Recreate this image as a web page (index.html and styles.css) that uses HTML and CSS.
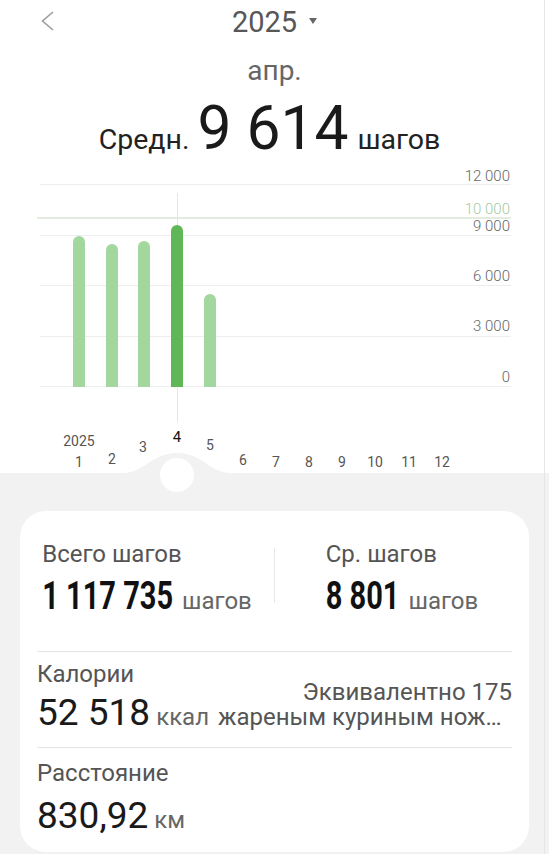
FILE: index.html
```html
<!DOCTYPE html>
<html>
<head>
    <meta charset="utf-8">
    <title>Шаги — 2025</title>
    <link rel="stylesheet" href="styles.css">
</head>
<body>
    <div class="top">
        <div class="topbar">
            <span class="back">
                <svg width="13" height="20" viewBox="0 0 13 20"><polyline points="12,1 1.5,10 12,19" fill="none" stroke="#9c9c9c" stroke-width="1.6"/></svg>
            </span>
            <div class="year">2025<span class="caret"></span></div>
            <span></span>
        </div>
        <div class="month">апр.</div>
        <div class="avg">
            <span class="avg-label">Средн.</span>
            <span class="avg-num">9&nbsp;614</span>
            <span class="avg-unit">шагов</span>
        </div>

        <!-- monthly steps chart, y: 0 at 226, 12 000 at 24 -->
        <svg class="chart" width="549" height="340" viewBox="0 0 549 340">
            <g stroke="#eeeeee" stroke-width="1">
                <line x1="40" y1="24.5" x2="511" y2="24.5"/>
                <line x1="40" y1="75.5" x2="511" y2="75.5"/>
                <line x1="40" y1="125.5" x2="511" y2="125.5"/>
                <line x1="40" y1="176.5" x2="511" y2="176.5"/>
                <line x1="40" y1="226.5" x2="511" y2="226.5"/>
            </g>
            <line x1="37" y1="58" x2="511" y2="58" stroke="#c8d6bf" stroke-width="1"/>

            <g class="axis" text-anchor="end">
                <text x="510" y="21">12 000</text>
                <text x="510" y="54" class="goal">10 000</text>
                <text x="510" y="71">9 000</text>
                <text x="510" y="121">6 000</text>
                <text x="510" y="171">3 000</text>
                <text x="510" y="222">0</text>
            </g>

            <line x1="177.5" y1="33" x2="177.5" y2="262" stroke="#e3e9e0" stroke-width="1"/>

            <g fill="#a2d89d">
                <path d="M73 227 V82 A6 6 0 0 1 85 82 V227 Z"/>
                <path d="M106 227 V90 A6 6 0 0 1 118 90 V227 Z"/>
                <path d="M138 227 V87 A6 6 0 0 1 150 87 V227 Z"/>
                <path d="M204 227 V140 A6 6 0 0 1 216 140 V227 Z"/>
            </g>
            <path d="M171 227 V71 A6 6 0 0 1 183 71 V227 Z" fill="#60b758"/>

            <g class="months" text-anchor="middle">
                <text x="79" y="286">2025</text>
                <text x="79" y="307">1</text>
                <text x="112" y="304">2</text>
                <text x="143" y="292">3</text>
                <text x="177" y="282" class="current">4</text>
                <text x="210" y="290">5</text>
                <text x="243" y="305">6</text>
                <text x="276" y="307">7</text>
                <text x="309" y="307">8</text>
                <text x="342" y="307">9</text>
                <text x="375" y="307">10</text>
                <text x="409" y="307">11</text>
                <text x="442" y="307">12</text>
            </g>

            <!-- grey bottom with the bump under the selected month -->
            <rect x="0" y="313" width="549" height="27" fill="#f2f2f2"/>
            <path d="M120 313.5 C146 313.5 150 293 177 293 C204 293 208 313.5 234 313.5 Z" fill="#f2f2f2"/>
            <circle cx="177" cy="315" r="17" fill="#ffffff"/>
        </svg>
    </div>

    <div class="summary">
        <div class="card">
            <div class="stats">
                <div class="stat">
                    <div>
                        <div class="label">Всего шагов</div>
                        <div class="value"><span class="num-c">1&nbsp;117&nbsp;735</span><span class="unit unit-wide">шагов</span></div>
                    </div>
                </div>
                <div class="vsep"></div>
                <div class="stat">
                    <div>
                        <div class="label">Ср. шагов</div>
                        <div class="value"><span class="num-c">8&nbsp;801</span><span class="unit unit-wide">шагов</span></div>
                    </div>
                </div>
            </div>

            <div class="row cal">
                <div>
                    <div class="label">Калории</div>
                    <div class="value value-cal"><span class="num">52&nbsp;518</span><span class="unit">ккал</span></div>
                </div>
                <div class="cal-note">
                    <div>Эквивалентно 175</div>
                    <div class="clip">жареным куриным ножкам</div>
                </div>
            </div>

            <div class="row dist">
                <div class="label">Расстояние</div>
                <div class="value value-dist"><span class="num">830,92</span><span class="unit">км</span></div>
            </div>
        </div>
    </div>

    <div class="edge"></div>
</body>
</html>
```

FILE: styles.css
```css
body {
    margin: 0;
    font-family: Roboto, "Noto Sans", sans-serif;
    background: #f2f2f2;
    color: #1c1c1c;
}

.top {
    background: #fff;
}

.topbar {
    height: 44px;
    display: grid;
    grid-template-columns: 1fr auto 1fr;
    align-items: center;
}

.back {
    display: flex;
    padding-left: 41px;
    padding-bottom: 2px;
}

.year {
    display: flex;
    align-items: center;
    font-size: 29px;
    line-height: 44px;
    color: #575757;
}

.caret {
    width: 0;
    height: 0;
    margin: 0 0 2px 12px;
    border-left: 4.5px solid transparent;
    border-right: 4.5px solid transparent;
    border-top: 6px solid #666;
}

.month {
    margin-top: 12px;
    height: 30px;
    line-height: 30px;
    font-size: 28px;
    color: #666;
    text-align: center;
}

.avg {
    margin-top: 11px;
    height: 63px;
    line-height: 63px;
    display: flex;
    justify-content: center;
    align-items: baseline;
    padding-right: 10px;
}

.avg-label,
.avg-unit {
    font-size: 28.5px;
    color: #222;
}

.avg-num {
    font-size: 60.5px;
    margin: 0 9px 0 8px;
    color: #1a1a1a;
}

.chart {
    display: block;
}

.chart text {
    font-family: Roboto, sans-serif;
}

.axis text {
    font-size: 15px;
    font-weight: 300;
    fill: #666;
}

.axis .goal {
    fill: #a7c9a2;
}

.months text {
    font-size: 14px;
    fill: #555;
}

.months .current {
    font-size: 15px;
    fill: #111;
}

/* summary card */

.summary {
    padding: 11px 20px 0;
}

.card {
    background: #fff;
    border-radius: 26px;
    padding: 0 17px;
    height: 341px;
    box-sizing: border-box;
}

.stats {
    margin: 0 -17px;
    padding: 29px 0 33px;
    display: grid;
    grid-template-columns: 1fr 1px 1fr;
}

.stat {
    display: flex;
    justify-content: center;
}

.vsep {
    height: 55px;
    margin-top: 8px;
    background: #e8e8e8;
}

.label {
    font-size: 24px;
    line-height: 28px;
    color: #555;
}

.value {
    margin-top: 8px;
    font-size: 37px;
    line-height: 42px;
    white-space: nowrap;
}

/* narrow, tall digits: small font stretched upwards from the baseline */
.num-c {
    display: inline-block;
    font-size: 29px;
    line-height: 30px;
    font-weight: 700;
    color: #111;
    transform: scaleY(1.31);
    transform-origin: 0 83%;
}

.num {
    color: #1a1a1a;
}

.unit {
    font-size: 24px;
    line-height: 24px;
    color: #666;
    margin-left: 6px;
}

.unit-wide {
    margin-left: 9px;
}

.row {
    border-top: 1px solid #e3e3e3;
}

.cal {
    display: flex;
    align-items: flex-end;
    gap: 9px;
    padding: 8px 0 13px;
}

.value-cal {
    margin-top: 4px;
}

.cal-note {
    flex: 1;
    min-width: 0;
    margin-bottom: 4px;
    text-align: right;
    font-size: 24px;
    line-height: 25px;
    color: #555;
}

.cal-note .clip {
    white-space: nowrap;
    overflow: hidden;
    text-overflow: ellipsis;
}

.dist {
    padding-top: 11px;
}

.value-dist {
    margin-top: 8px;
}

/* thin strip along the right screen edge */
.edge {
    position: fixed;
    top: 0;
    bottom: 0;
    right: 4px;
    width: 1px;
    background: #e6e6e6;
}
```
